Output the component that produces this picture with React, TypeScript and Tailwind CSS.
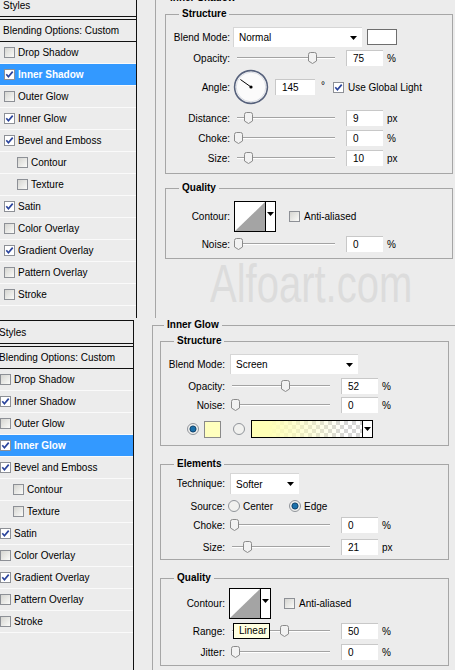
import React from 'react';

type StyleItem = { name: string; on: boolean; sub?: boolean };

const styleItems: StyleItem[] = [
  { name: 'Drop Shadow', on: false },
  { name: 'Inner Shadow', on: true },
  { name: 'Outer Glow', on: false },
  { name: 'Inner Glow', on: true },
  { name: 'Bevel and Emboss', on: true },
  { name: 'Contour', on: false, sub: true },
  { name: 'Texture', on: false, sub: true },
  { name: 'Satin', on: true },
  { name: 'Color Overlay', on: false },
  { name: 'Gradient Overlay', on: true },
  { name: 'Pattern Overlay', on: false },
  { name: 'Stroke', on: false },
];

function Check({ on, light }: { on: boolean; light?: boolean }) {
  return (
    <span
      className={`flex h-[11px] w-[11px] shrink-0 items-center justify-center border border-[#8d9096] ${
        on || light ? 'bg-white' : 'bg-linear-to-br from-[#d5d5d1] to-[#fbfbf9]'
      }`}
    >
      {on && (
        <svg width="9" height="9" viewBox="0 0 9 9">
          <path d="M1.3 4.3 3.4 6.7 7.7 1.6" fill="none" stroke="#2a449c" strokeWidth="1.7" />
        </svg>
      )}
    </span>
  );
}

function Radio({ on }: { on: boolean }) {
  return (
    <svg width="12" height="12" viewBox="0 0 12 12" className="shrink-0">
      <circle cx="6" cy="6" r="5.5" fill="#f1f1ef" stroke="#8f9399" />
      {on && <circle cx="6" cy="6" r="3.1" fill="#1b70aa" stroke="#0b3b63" strokeWidth="0.9" />}
    </svg>
  );
}

function Arrow() {
  return (
    <svg width="7" height="4" viewBox="0 0 7 4" className="shrink-0">
      <path d="M0 0H7L3.5 4Z" fill="#000" />
    </svg>
  );
}

function StylesList({ active, shifted }: { active: string; shifted?: boolean }) {
  return (
    <div className={shifted ? '-ml-[4px]' : ''}>
      <div className="flex h-[22px] items-center pl-[3px]">Styles</div>
      <div className="h-[4px] border-y border-[#111]" />
      <div className="flex h-[22px] items-center border-b border-[#111] pl-[3px]">
        Blending Options: Custom
      </div>
      {styleItems.map((item) => {
        const sel = item.name === active;
        return (
          <div
            key={item.name}
            className={`flex h-[22px] items-center gap-[3px] border-b border-[#fafafa] ${
              item.sub ? 'pl-[17px]' : 'pl-[4px]'
            } ${sel ? 'bg-[#3399ff] font-bold text-white' : ''}`}
          >
            <Check on={item.on} light={sel} />
            <span>{item.name}</span>
          </div>
        );
      })}
    </div>
  );
}

function Label({ children }: { children: React.ReactNode }) {
  return <span className="w-[64px] shrink-0 text-right">{children}</span>;
}

function Field({ value, className = '' }: { value: string; className?: string }) {
  return (
    <div
      className={`flex h-[16px] shrink-0 items-center border-t border-l border-[#c8c8c8] bg-white pl-[6px] ${className}`}
    >
      {value}
    </div>
  );
}

function Slider({ pos, tip }: { pos: number; tip?: string }) {
  return (
    <div className="relative ml-[7px] h-[16px] w-[98px] shrink-0">
      <div className="mt-[7px] h-[2px] border-t border-b border-[#a3a3a3] border-b-white" />
      <svg
        width="9"
        height="12"
        viewBox="0 0 9 12"
        className="absolute top-[2px]"
        style={{ left: pos - 4 }}
      >
        <path
          d="M.5 2.5Q.5.5 2.5.5h4Q8.5.5 8.5 2.5V9L4.5 11.5.5 9Z"
          fill="#f2f2f2"
          stroke="#8a8a8a"
        />
      </svg>
      {tip && (
        <div className="absolute top-0 left-[1px] h-[16px] w-[37px] border border-black bg-[#ffffe1] pl-[5px] leading-[14px]">
          {tip}
        </div>
      )}
    </div>
  );
}

function SliderRow({
  label,
  pos,
  value,
  unit,
  tip,
  className = '',
}: {
  label: string;
  pos: number;
  value: string;
  unit: string;
  tip?: string;
  className?: string;
}) {
  return (
    <div className={`flex h-[16px] items-center ${className}`}>
      <Label>{label}</Label>
      <Slider pos={pos} tip={tip} />
      <Field value={value} className="ml-[11px] w-[37px]" />
      <span className="ml-[4px]">{unit}</span>
    </div>
  );
}

function Select({ value, className = '' }: { value: string; className?: string }) {
  return (
    <div
      className={`flex shrink-0 items-center justify-between border-t border-l border-[#d6d6d6] bg-white pr-[5px] pl-[5px] ${className}`}
    >
      <span>{value}</span>
      <Arrow />
    </div>
  );
}

function ContourBox() {
  return (
    <div className="ml-[4px] flex h-[31px] w-[42px] shrink-0 border border-black bg-white">
      <svg width="30" height="29" viewBox="0 0 30 29" className="shrink-0">
        <path d="M0 29 30 0V29Z" fill="#a4a4a4" />
      </svg>
      <div className="flex flex-1 items-center justify-center border-l border-black pb-[6px]">
        <Arrow />
      </div>
    </div>
  );
}

function Dial() {
  return (
    <svg width="36" height="36" viewBox="0 0 36 36" className="ml-[3px] shrink-0">
      <circle cx="18" cy="18" r="16.4" fill="#fbfbfb" stroke="#56617b" strokeWidth="1.6" />
      <circle cx="18" cy="18" r="14.8" fill="none" stroke="#d9dce3" />
      <line x1="18" y1="18" x2="7.4" y2="10.5" stroke="#000" />
      <circle cx="18" cy="18" r="1.6" fill="#000" />
    </svg>
  );
}

function Legend({ children, className = '' }: { children: React.ReactNode; className?: string }) {
  return <legend className={`px-[3px] font-bold leading-[12px] ${className}`}>{children}</legend>;
}

function InnerShadowPanel() {
  return (
    <fieldset className="w-[330px] border border-[#a6a6a6] pl-[9px] pb-[60px]">
      <Legend className="ml-[2px]">Inner Shadow</Legend>
      <fieldset className="mt-[4px] w-[288px] border border-[#a6a6a6] pb-[7px]">
        <Legend className="ml-[13px]">Structure</Legend>
        <div className="mt-[7px] flex h-[20px] items-center">
          <Label>Blend Mode:</Label>
          <Select value="Normal" className="ml-[3px] h-[20px] w-[129px]" />
          <div className="ml-[5px] h-[16px] w-[30px] border border-[#6e6e6e] bg-white" />
        </div>
        <SliderRow label="Opacity:" pos={75} value="75" unit="%" className="mt-[3px]" />
        <div className="mt-[3px] flex h-[36px] items-center">
          <Label>Angle:</Label>
          <Dial />
          <Field value="145" className="ml-[6px] w-[40px]" />
          <span className="ml-[6px] self-start pt-[9px]">°</span>
          <span className="ml-[8px]">
            <Check on />
          </span>
          <span className="ml-[4px]">Use Global Light</span>
        </div>
        <SliderRow label="Distance:" pos={11} value="9" unit="px" className="mt-[5px]" />
        <SliderRow label="Choke:" pos={1} value="0" unit="%" className="mt-[4px]" />
        <SliderRow label="Size:" pos={11} value="10" unit="px" className="mt-[4px]" />
      </fieldset>

      <fieldset className="mt-[8px] w-[288px] border border-[#a6a6a6] pb-[6px]">
        <Legend className="ml-[13px]">Quality</Legend>
        <div className="mt-[7px] flex h-[31px] items-center">
          <Label>Contour:</Label>
          <ContourBox />
          <span className="ml-[13px]">
            <Check on={false} />
          </span>
          <span className="ml-[4px]">Anti-aliased</span>
        </div>
        <SliderRow label="Noise:" pos={1} value="0" unit="%" className="mt-[4px]" />
      </fieldset>

      <div className="-mt-[3px] ml-[45px] origin-top scale-y-[1.35] font-['Liberation_Sans',Arial,sans-serif] text-[40px] leading-[40px] text-[#dcdcdc]">
        Alfoart.com
      </div>
    </fieldset>
  );
}

function InnerGlowPanel() {
  return (
    <fieldset className="w-[330px] border border-[#a6a6a6] pl-[7px] pb-[20px]">
      <Legend className="ml-[4px]">Inner Glow</Legend>
      <fieldset className="mt-[4px] w-[289px] border border-[#a6a6a6] pb-[7px]">
        <Legend className="ml-[13px]">Structure</Legend>
        <div className="mt-[7px] flex h-[20px] items-center">
          <Label>Blend Mode:</Label>
          <Select value="Screen" className="ml-[5px] h-[20px] w-[128px]" />
        </div>
        <SliderRow label="Opacity:" pos={53} value="52" unit="%" className="mt-[4px]" />
        <SliderRow label="Noise:" pos={3} value="0" unit="%" className="mt-[3px]" />
        <div className="mt-[7px] flex h-[18px] items-center">
          <span className="ml-[26px]">
            <Radio on />
          </span>
          <div className="ml-[5px] h-[17px] w-[17px] border border-[#8a8a8a] bg-[#ffffbe]" />
          <span className="ml-[12px]">
            <Radio on={false} />
          </span>
          <div className="ml-[6px] flex h-[18px] w-[122px] border border-black">
            <div className="flex-1 bg-[image:repeating-conic-gradient(#d6d6d6_0%_25%,#ffffff_0%_50%)] bg-[length:8px_8px]">
              <div className="h-full w-full bg-linear-to-r from-[#ffffb6] from-15% to-[#ffffb6]/0 to-85%" />
            </div>
            <div className="flex w-[10px] items-center justify-center border-l border-black bg-white">
              <Arrow />
            </div>
          </div>
        </div>
      </fieldset>

      <fieldset className="mt-[12px] w-[289px] border border-[#a6a6a6] pb-[4px]">
        <Legend className="ml-[13px]">Elements</Legend>
        <div className="mt-[3px] flex h-[21px] items-center">
          <Label>Technique:</Label>
          <Select value="Softer" className="ml-[5px] h-[21px] w-[69px]" />
        </div>
        <div className="mt-[5px] flex h-[14px] items-center">
          <Label>Source:</Label>
          <span className="ml-[3px]">
            <Radio on={false} />
          </span>
          <span className="ml-[3px]">Center</span>
          <span className="ml-[16px]">
            <Radio on />
          </span>
          <span className="ml-[3px]">Edge</span>
        </div>
        <SliderRow label="Choke:" pos={2} value="0" unit="%" className="mt-[4px]" />
        <SliderRow label="Size:" pos={15} value="21" unit="px" className="mt-[6px]" />
      </fieldset>

      <fieldset className="mt-[12px] w-[289px] border border-[#a6a6a6] pb-[5px]">
        <Legend className="ml-[13px]">Quality</Legend>
        <div className="mt-[4px] flex h-[31px] items-center">
          <Label>Contour:</Label>
          <ContourBox />
          <span className="ml-[13px]">
            <Check on={false} />
          </span>
          <span className="ml-[4px]">Anti-aliased</span>
        </div>
        <SliderRow label="Range:" pos={52} value="50" unit="%" tip="Linear" className="mt-[4px]" />
        <SliderRow label="Jitter:" pos={3} value="0" unit="%" className="mt-[5px]" />
      </fieldset>
    </fieldset>
  );
}

export default function App() {
  return (
    <div className="h-[670px] w-[455px] overflow-hidden bg-[#ececec] font-['Liberation_Sans',Arial,sans-serif] text-[10px] text-black">
      {/* Inner Shadow screenshot */}
      <div className="flex h-[318px] overflow-hidden">
        <div className="w-[137px] shrink-0 border-r border-[#111]">
          <div className="-mt-[6px]">
            <StylesList active="Inner Shadow" />
          </div>
        </div>
        <div className="-mt-[8px] min-w-0 flex-1 pl-[18px]">
          <InnerShadowPanel />
        </div>
      </div>

      {/* Inner Glow screenshot */}
      <div className="flex h-[352px] overflow-hidden">
        <div className="mt-[2px] w-[134px] shrink-0 overflow-hidden border-t border-r border-[#111]">
          <StylesList active="Inner Glow" shifted />
        </div>
        <div className="mt-[1px] min-w-0 flex-1 pl-[18px]">
          <InnerGlowPanel />
        </div>
      </div>
    </div>
  );
}
